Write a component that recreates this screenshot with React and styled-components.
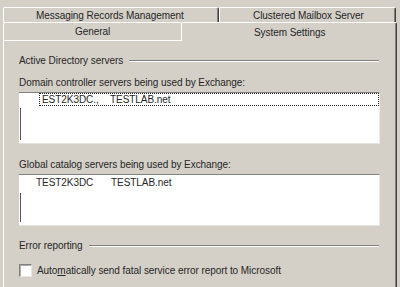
import React from "react";
import styled, { createGlobalStyle } from "styled-components";

const GlobalStyle = createGlobalStyle`
  html, body {
    margin: 0;
    padding: 0;
    background: #d4d0c8;
  }
  body {
    font-family: "Liberation Sans", Arial, sans-serif;
    font-size: 10px;
    letter-spacing: -0.06px;
    color: #262626;
  }
`;

const Window = styled.div`
  width: 400px;
  height: 287px;
  overflow: hidden;
  background: #d4d0c8;
  padding-top: 7px;
  box-sizing: border-box;
`;

const TabRow = styled.div`
  display: flex;
  padding-left: 3px;
`;

const Tab = styled.div`
  box-sizing: border-box;
  width: ${({ width }) => width}px;
  display: flex;
  align-items: center;
  justify-content: ${({ align }) => (align === "left" ? "flex-start" : "center")};
  padding-left: ${({ indent }) => indent || 0}px;
  border-top: 1px solid #fff;
  border-left: 1px solid #fff;
  border-right: ${({ noRight }) => (noRight ? "none" : "1px solid #404040")};
  border-top-left-radius: 2px;
  border-top-right-radius: 2px;
  box-shadow: ${({ noRight }) => (noRight ? "none" : "inset -1px 0 0 #808080")};
  background: #d4d0c8;
  white-space: nowrap;
  position: relative;
  z-index: ${({ active }) => (active ? 2 : 1)};
  margin-bottom: ${({ active }) => (active ? "-1px" : 0)};
  height: ${({ height, active }) => (active ? height + 1 : height)}px;
`;

const Panel = styled.div`
  margin: 0 3px;
  border-top: 1px solid #fff;
  border-left: 1px solid #fff;
  border-right: 1px solid #404040;
  box-shadow: inset -1px 0 0 #808080;
  height: 260px;
  padding: 13px 0 0 15px;
  box-sizing: border-box;
  display: flex;
  flex-direction: column;
`;

const GroupHeader = styled.div`
  display: flex;
  align-items: center;
  gap: 6px;
  width: 360px;
  height: 13px;
  margin-top: ${({ top }) => top || 0}px;
`;

const Etch = styled.div`
  flex: 1;
  height: 0;
  border-top: 1px solid #808080;
  border-bottom: 1px solid #fff;
`;

const Caption = styled.div`
  height: 13px;
  line-height: 13px;
  margin-top: ${({ top }) => top}px;
  white-space: nowrap;
`;

const ListBox = styled.div`
  position: relative;
  box-sizing: border-box;
  width: 361px;
  height: 52px;
  margin-top: 3px;
  background: #fff;
  border-top: 1px solid #808080;
  border-bottom: 1px solid #e4e2dc;
  border-right: 1px solid #ecebe6;
  padding: ${({ focused }) => (focused ? "0 0 0 20px" : "1px 0 0 16px")};

  &::before {
    content: "";
    position: absolute;
    left: 1px;
    top: ${({ focused }) => (focused ? 15 : 18)}px;
    bottom: 3px;
    width: 1px;
    background: #555;
  }
`;

const Row = styled.div`
  display: flex;
  height: 13px;
  align-items: center;
  box-sizing: border-box;
  border: ${({ focused }) => (focused ? "1px dotted #222" : "1px solid transparent")};
  padding-left: ${({ focused }) => (focused ? 2 : 0)}px;
  white-space: nowrap;
`;

const Cell = styled.span`
  width: ${({ width }) => width}px;
  flex: none;
`;

const CheckRow = styled.label`
  display: flex;
  align-items: center;
  gap: 5px;
  margin-top: 11px;
  height: 14px;
  white-space: nowrap;
`;

const CheckBox = styled.span`
  width: 13px;
  height: 13px;
  box-sizing: border-box;
  background: #fff;
  border-top: 1px solid #808080;
  border-left: 1px solid #808080;
  border-bottom: 1px solid #e8e6e0;
  border-right: 1px solid #e8e6e0;
  box-shadow: inset 1px 1px 0 #b0aca4;
  flex: none;
`;

const Under = styled.span`
  text-decoration: underline;
`;

export default function App() {
  return (
    <Window>
      <GlobalStyle />
      <TabRow>
        <Tab width={216} height={15} align="left" indent={32}>
          Messaging Records Management
        </Tab>
        <Tab width={177} height={15} align="left" indent={33}>
          Clustered Mailbox Server
        </Tab>
      </TabRow>
      <TabRow>
        <Tab width={178} height={18} noRight>
          General
        </Tab>
        <Tab width={216} height={18} active align="left" indent={72}>
          System Settings
        </Tab>
      </TabRow>
      <Panel>
        <GroupHeader>
          <span>Active Directory servers</span>
          <Etch />
        </GroupHeader>
        <Caption top={9}>Domain controller servers being used by Exchange:</Caption>
        <ListBox focused>
          <Row focused>
            <Cell width={68}>EST2K3DC.,</Cell>
            <Cell>TESTLAB.net</Cell>
          </Row>
        </ListBox>
        <Caption top={14}>Global catalog servers being used by Exchange:</Caption>
        <ListBox>
          <Row>
            <Cell width={75}>TEST2K3DC</Cell>
            <Cell>TESTLAB.net</Cell>
          </Row>
        </ListBox>
        <GroupHeader top={13}>
          <span>Error reporting</span>
          <Etch />
        </GroupHeader>
        <CheckRow>
          <CheckBox />
          <span>
            Auto<Under>m</Under>atically send fatal service error report to Microsoft
          </span>
        </CheckRow>
      </Panel>
    </Window>
  );
}
